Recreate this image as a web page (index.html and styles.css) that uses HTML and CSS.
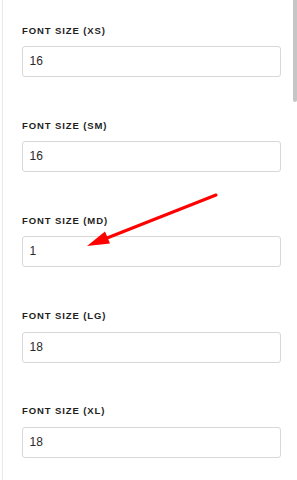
FILE: index.html
```html
<!DOCTYPE html>
<html>
<head>
<meta charset="utf-8">
<link rel="stylesheet" href="styles.css">
</head>
<body>
<div class="panel">
  <div class="field">
    <div class="label">FONT SIZE (XS)</div>
    <div class="input">16</div>
  </div>
  <div class="field">
    <div class="label">FONT SIZE (SM)</div>
    <div class="input">16</div>
  </div>
  <div class="field">
    <div class="label">FONT SIZE (MD)</div>
    <div class="input">1</div>
  </div>
  <div class="field">
    <div class="label">FONT SIZE (LG)</div>
    <div class="input">18</div>
  </div>
  <div class="field">
    <div class="label">FONT SIZE (XL)</div>
    <div class="input">18</div>
  </div>
</div>
<div class="scroll-thumb"></div>
<svg class="arrow" width="297" height="480" viewBox="0 0 297 480">
  <line x1="216" y1="195" x2="102" y2="240" stroke="#ff0000" stroke-width="3" stroke-linecap="round"/>
  <polygon points="87,246 110,243.5 105,231.5" fill="#ff0000"/>
</svg>
</body>
</html>
```

FILE: styles.css
```css
html, body {
  margin: 0;
  padding: 0;
  background: #ffffff;
  overflow: hidden;
  height: 480px;
}
body {
  font-family: "Liberation Sans", Arial, sans-serif;
  position: relative;
}
.panel {
  margin-left: 2px;
  border-left: 1px solid #e8e8e8;
  padding-left: 19px;
  height: 480px;
  box-sizing: border-box;
}
.field {
  padding-top: 24.5px;
  height: 95.2px;
  box-sizing: border-box;
}
.label {
  font-size: 9.5px;
  line-height: 12px;
  font-weight: bold;
  letter-spacing: 0.9px;
  color: #1e1e1e;
}
.input {
  margin-top: 9.5px;
  width: 259px;
  height: 31px;
  box-sizing: border-box;
  border: 1px solid #d8d8d8;
  border-radius: 3px;
  padding-left: 6.5px;
  font-size: 12px;
  line-height: 29px;
  color: #2a2a2a;
}
.scroll-thumb {
  position: absolute;
  top: 0;
  right: 0;
  width: 4px;
  height: 102px;
  background: #c6c6c6;
  border-radius: 0 0 2px 2px;
}
.arrow {
  position: absolute;
  top: 0;
  left: 0;
  pointer-events: none;
}
```
